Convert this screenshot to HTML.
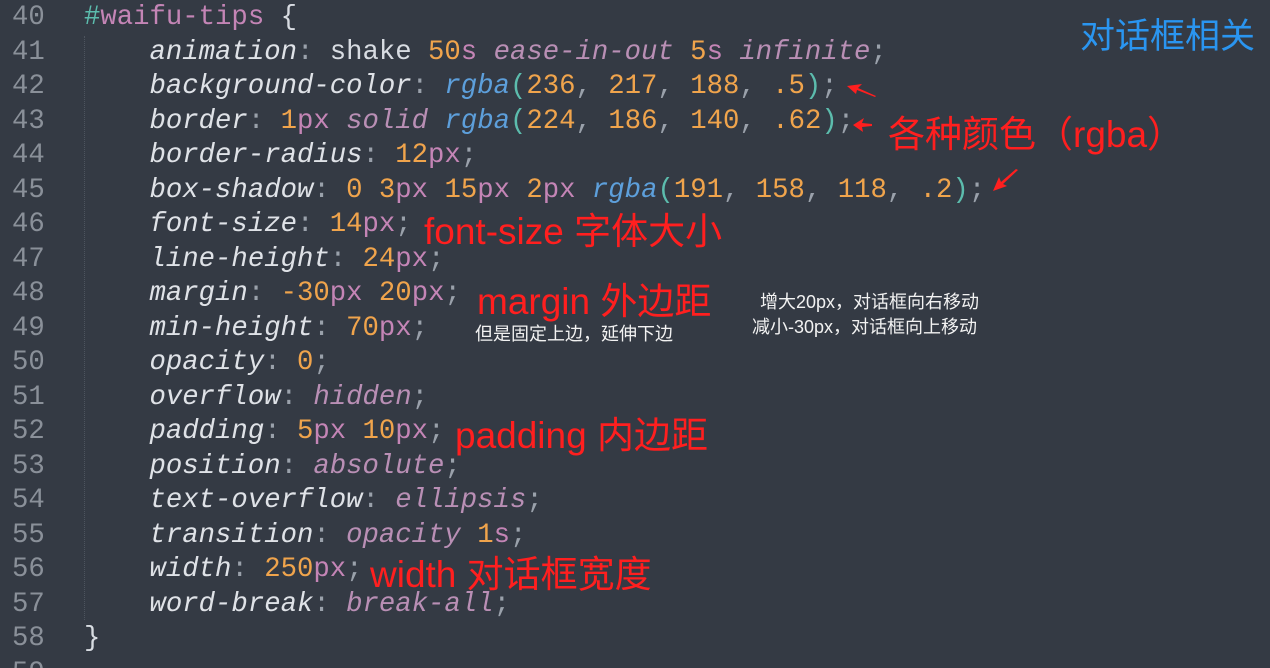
<!DOCTYPE html>
<html><head><meta charset="utf-8"><style>
html,body{margin:0;padding:0;width:1270px;height:668px;overflow:hidden;}
body{background:#343a44;position:relative;font-family:"Liberation Mono",monospace;}
.code{position:absolute;left:0;top:1px;font-size:27.3px;line-height:34.5px;white-space:pre;color:#d8dce2;}
.ln{position:absolute;left:12px;width:60px;color:#8a9099;}
.l{position:absolute;left:84px;}
.p{font-style:italic;color:#dfe2e7}
.n{color:#f0a44c}
.u{color:#c485b6}
.k{font-style:italic;color:#b98fb5}
.f{font-style:italic;color:#5d9fdb}
.b{color:#5cbcad}
.c{color:#9aa1ab}
.s{color:#5cbcad}
.id{color:#c485b6}
.a{position:absolute;font-family:"Liberation Sans","Noto Sans CJK SC",sans-serif;white-space:nowrap;}
.r{color:#ff1f1f;font-size:37px;}
.w{color:#f2f2f2;font-size:18px;}
.guide{position:absolute;left:84px;top:36px;height:584px;border-left:1px dotted #4d545e;}
</style></head><body>
<div class="guide"></div>
<div class="code">
<div class="ln" style="top:0">40</div><div class="l" style="top:0"><span class="s">#</span><span class="id">waifu-tips</span> {</div>
<div class="ln" style="top:34.5px">41</div><div class="l" style="top:34.5px">    <span class="p">animation</span><span class="c">:</span> shake <span class="n">50</span><span class="u">s</span> <span class="k">ease-in-out</span> <span class="n">5</span><span class="u">s</span> <span class="k">infinite</span><span class="c">;</span></div>
<div class="ln" style="top:69px">42</div><div class="l" style="top:69px">    <span class="p">background-color</span><span class="c">:</span> <span class="f">rgba</span><span class="b">(</span><span class="n">236</span><span class="c">,</span> <span class="n">217</span><span class="c">,</span> <span class="n">188</span><span class="c">,</span> <span class="n">.5</span><span class="b">)</span><span class="c">;</span></div>
<div class="ln" style="top:103.5px">43</div><div class="l" style="top:103.5px">    <span class="p">border</span><span class="c">:</span> <span class="n">1</span><span class="u">px</span> <span class="k">solid</span> <span class="f">rgba</span><span class="b">(</span><span class="n">224</span><span class="c">,</span> <span class="n">186</span><span class="c">,</span> <span class="n">140</span><span class="c">,</span> <span class="n">.62</span><span class="b">)</span><span class="c">;</span></div>
<div class="ln" style="top:138px">44</div><div class="l" style="top:138px">    <span class="p">border-radius</span><span class="c">:</span> <span class="n">12</span><span class="u">px</span><span class="c">;</span></div>
<div class="ln" style="top:172.5px">45</div><div class="l" style="top:172.5px">    <span class="p">box-shadow</span><span class="c">:</span> <span class="n">0</span> <span class="n">3</span><span class="u">px</span> <span class="n">15</span><span class="u">px</span> <span class="n">2</span><span class="u">px</span> <span class="f">rgba</span><span class="b">(</span><span class="n">191</span><span class="c">,</span> <span class="n">158</span><span class="c">,</span> <span class="n">118</span><span class="c">,</span> <span class="n">.2</span><span class="b">)</span><span class="c">;</span></div>
<div class="ln" style="top:207px">46</div><div class="l" style="top:207px">    <span class="p">font-size</span><span class="c">:</span> <span class="n">14</span><span class="u">px</span><span class="c">;</span></div>
<div class="ln" style="top:241.5px">47</div><div class="l" style="top:241.5px">    <span class="p">line-height</span><span class="c">:</span> <span class="n">24</span><span class="u">px</span><span class="c">;</span></div>
<div class="ln" style="top:276px">48</div><div class="l" style="top:276px">    <span class="p">margin</span><span class="c">:</span> <span class="n">-30</span><span class="u">px</span> <span class="n">20</span><span class="u">px</span><span class="c">;</span></div>
<div class="ln" style="top:310.5px">49</div><div class="l" style="top:310.5px">    <span class="p">min-height</span><span class="c">:</span> <span class="n">70</span><span class="u">px</span><span class="c">;</span></div>
<div class="ln" style="top:345px">50</div><div class="l" style="top:345px">    <span class="p">opacity</span><span class="c">:</span> <span class="n">0</span><span class="c">;</span></div>
<div class="ln" style="top:379.5px">51</div><div class="l" style="top:379.5px">    <span class="p">overflow</span><span class="c">:</span> <span class="k">hidden</span><span class="c">;</span></div>
<div class="ln" style="top:414px">52</div><div class="l" style="top:414px">    <span class="p">padding</span><span class="c">:</span> <span class="n">5</span><span class="u">px</span> <span class="n">10</span><span class="u">px</span><span class="c">;</span></div>
<div class="ln" style="top:448.5px">53</div><div class="l" style="top:448.5px">    <span class="p">position</span><span class="c">:</span> <span class="k">absolute</span><span class="c">;</span></div>
<div class="ln" style="top:483px">54</div><div class="l" style="top:483px">    <span class="p">text-overflow</span><span class="c">:</span> <span class="k">ellipsis</span><span class="c">;</span></div>
<div class="ln" style="top:517.5px">55</div><div class="l" style="top:517.5px">    <span class="p">transition</span><span class="c">:</span> <span class="k">opacity</span> <span class="n">1</span><span class="u">s</span><span class="c">;</span></div>
<div class="ln" style="top:552px">56</div><div class="l" style="top:552px">    <span class="p">width</span><span class="c">:</span> <span class="n">250</span><span class="u">px</span><span class="c">;</span></div>
<div class="ln" style="top:586.5px">57</div><div class="l" style="top:586.5px">    <span class="p">word-break</span><span class="c">:</span> <span class="k">break-all</span><span class="c">;</span></div>
<div class="ln" style="top:621px">58</div><div class="l" style="top:621px">}</div>
<div class="ln" style="top:655.5px">59</div>
</div>
<div class="a" style="left:1080px;top:8px;font-size:35px;color:#2a95f0;">对话框相关</div>
<div class="a r" style="left:888px;top:104px;">各种颜色（rgba）</div>
<div class="a r" style="left:424px;top:201px;">font-size 字体大小</div>
<div class="a r" style="left:477px;top:271px;">margin 外边距</div>
<div class="a w" style="left:475px;top:320px;">但是固定上边，延伸下边</div>
<div class="a w" style="left:760px;top:288px;">增大20px，对话框向右移动</div>
<div class="a w" style="left:752px;top:313px;">减小-30px，对话框向上移动</div>
<div class="a r" style="left:455px;top:405px;">padding 内边距</div>
<div class="a r" style="left:370px;top:544px;">width 对话框宽度</div>
<svg width="1270" height="668" style="position:absolute;left:0;top:0" fill="#ff1f1f" stroke="none">
<path d="M847 86 L862 84 L858 88 L876 96 L875 97 L857 90 L856 94 Z"/>
<path d="M853 125 L864 118 L862 123 L872 124 L872 126 L862 127 L863 132 Z"/>
<path d="M993 191 L999 177 L1001 182 L1016 169 L1018 170 L1003 184 L1007 186 Z"/>
</svg>
</body></html>
